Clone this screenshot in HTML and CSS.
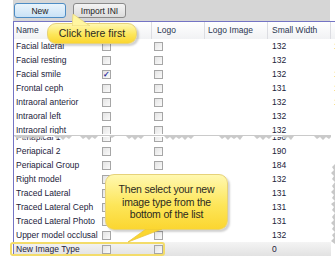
FILE: index.html
```html
<!DOCTYPE html>
<html lang="en">
<head>
    <meta charset="UTF-8">
    <title>Image Types</title>
    <link rel="stylesheet" href="styles.css">
</head>
<body>
    <div class="janela">
        <div class="barra">
            <button class="botao ativo">New</button>
            <button class="botao">Import INI</button>
        </div>

        <div class="grelha">
            <div class="linha cabecalho">
                <div class="col nome">Name</div>
                <div class="col def">Default</div>
                <div class="col logo">Logo</div>
                <div class="col img">Logo Image</div>
                <div class="col larg">Small Width</div>
                <div class="col extra"></div>
            </div>

            <div class="parte cima">
                <div class="linha"><div class="col nome">Facial lateral</div><div class="col def"><span class="caixinha"></span></div><div class="col logo"><span class="caixinha"></span></div><div class="col img"></div><div class="col larg">132</div><div class="col extra">1</div></div>
                <div class="linha"><div class="col nome">Facial resting</div><div class="col def"><span class="caixinha"></span></div><div class="col logo"><span class="caixinha"></span></div><div class="col img"></div><div class="col larg">132</div><div class="col extra"></div></div>
                <div class="linha"><div class="col nome">Facial smile</div><div class="col def"><span class="caixinha marcada">&#10003;</span></div><div class="col logo"><span class="caixinha"></span></div><div class="col img"></div><div class="col larg">132</div><div class="col extra">1</div></div>
                <div class="linha"><div class="col nome">Frontal ceph</div><div class="col def"><span class="caixinha"></span></div><div class="col logo"><span class="caixinha"></span></div><div class="col img"></div><div class="col larg">131</div><div class="col extra">1</div></div>
                <div class="linha"><div class="col nome">Intraoral anterior</div><div class="col def"><span class="caixinha"></span></div><div class="col logo"><span class="caixinha"></span></div><div class="col img"></div><div class="col larg">132</div><div class="col extra">1</div></div>
                <div class="linha"><div class="col nome">Intraoral left</div><div class="col def"><span class="caixinha"></span></div><div class="col logo"><span class="caixinha"></span></div><div class="col img"></div><div class="col larg">132</div><div class="col extra"></div></div>
                <div class="linha"><div class="col nome">Intraoral right</div><div class="col def"><span class="caixinha"></span></div><div class="col logo"><span class="caixinha"></span></div><div class="col img"></div><div class="col larg">132</div><div class="col extra"></div></div>
            </div>

            <div class="parte baixo">
                <svg class="rasgo" width="330" height="7" viewBox="0 0 330 7">
                    <rect x="0" y="0" width="330" height="3" fill="#ffffff"/>
                    <path d="M0 2 L4 5 L7 3 L10 6 L13 3 L16 5 L19 3 L22 6 L25 3 L28 5 L31 2 L40 2 L43 5 L46 3 L49 6 L52 3 L55 5 L58 2 L66 2 L69 5 L72 3 L75 6 L78 3 L81 5 L84 2 L95 2 L98 4 L101 2 L112 2 L115 5 L118 3 L121 6 L124 3 L127 5 L130 2 L150 2 L153 5 L156 3 L159 6 L162 3 L165 5 L168 3 L171 6 L174 3 L177 5 L180 2 L205 2 L208 5 L211 3 L214 6 L217 3 L220 5 L223 3 L226 6 L229 2 L240 2 L243 5 L246 3 L249 6 L252 3 L255 5 L258 2 L268 2 L271 5 L274 3 L277 6 L280 2 L300 2 L303 5 L306 3 L309 6 L312 3 L315 5 L318 2 L330 2 L330 1 L0 1 Z" fill="#cacaca"/>
                </svg>
                <svg class="borda" width="6" height="122" viewBox="0 0 6 122">
                    <rect x="2" y="0" width="4" height="122" fill="#ffffff"/>
                    <path d="M6 30 L3 33 L5 36 L2 39 L5 42 L3 45 L6 48 L3 52 L5 55 L2 58 L5 61 L3 64 L6 67 L2 70 L5 73 L3 76 L6 79 L3 83 L5 86 L2 89 L5 92 L3 95 L6 98 L3 101 L5 104 L2 107 L6 110 Z" fill="#c8c8c8"/>
                </svg>
                <div class="linha"><div class="col nome">Periapical 1</div><div class="col def"><span class="caixinha"></span></div><div class="col logo"><span class="caixinha"></span></div><div class="col img"></div><div class="col larg">190</div><div class="col extra"></div></div>
                <div class="linha"><div class="col nome">Periapical 2</div><div class="col def"><span class="caixinha"></span></div><div class="col logo"><span class="caixinha"></span></div><div class="col img"></div><div class="col larg">190</div><div class="col extra"></div></div>
                <div class="linha"><div class="col nome">Periapical Group</div><div class="col def"><span class="caixinha"></span></div><div class="col logo"><span class="caixinha"></span></div><div class="col img"></div><div class="col larg">184</div><div class="col extra">1</div></div>
                <div class="linha"><div class="col nome">Right model</div><div class="col def"><span class="caixinha"></span></div><div class="col logo"><span class="caixinha"></span></div><div class="col img"></div><div class="col larg">132</div><div class="col extra">1</div></div>
                <div class="linha"><div class="col nome">Traced Lateral</div><div class="col def"><span class="caixinha"></span></div><div class="col logo"><span class="caixinha"></span></div><div class="col img"></div><div class="col larg">131</div><div class="col extra"></div></div>
                <div class="linha"><div class="col nome">Traced Lateral Ceph</div><div class="col def"><span class="caixinha"></span></div><div class="col logo"><span class="caixinha"></span></div><div class="col img"></div><div class="col larg">131</div><div class="col extra"></div></div>
                <div class="linha"><div class="col nome">Traced Lateral Photo</div><div class="col def"><span class="caixinha"></span></div><div class="col logo"><span class="caixinha"></span></div><div class="col img"></div><div class="col larg">131</div><div class="col extra"></div></div>
                <div class="linha"><div class="col nome">Upper model occlusal</div><div class="col def"><span class="caixinha"></span></div><div class="col logo"><span class="caixinha"></span></div><div class="col img"></div><div class="col larg">132</div><div class="col extra"></div></div>
                <div class="linha selecionada"><div class="col nome">New Image Type</div><div class="col def"><span class="caixinha"></span></div><div class="col logo"><span class="caixinha"></span></div><div class="col img"></div><div class="col larg">0</div><div class="col extra"></div></div>
            </div>
        </div>

        <div class="destaque"></div>

        <div class="balao primeiro">
            <svg class="ponta" width="22" height="12" viewBox="0 0 22 12">
                <path d="M0 12 L1 0 L18 12 Z" fill="#fff6a0" stroke="#e6d47a" stroke-width="0.8"/>
            </svg>
            Click here first
        </div>

        <div class="balao segundo">
            <svg class="ponta" width="36" height="14" viewBox="0 0 36 14">
                <path d="M18 0 L0 13 L34 0 Z" fill="#fbd630" stroke="#e8c640" stroke-width="0.8"/>
            </svg>
            Then select your new<br>image type from the<br>bottom of the list
        </div>
    </div>
</body>
</html>
```

FILE: styles.css
```css
body {
    margin: 0;
    background: #ffffff;
    font-family: "Liberation Sans", Arial, sans-serif;
}
.janela {
    position: relative;
    width: 335px;
    height: 269px;
    overflow: hidden;
}
.barra {
    display: flex;
    align-items: center;
    gap: 7px;
    margin-left: 13px;
    width: 316px;
    height: 21px;
    padding-left: 1px;
    background: #d6d6d6;
}
.botao {
    height: 15px;
    padding: 0;
    font-family: inherit;
    font-size: 8.5px;
    color: #222;
    border: 1px solid #8a8a8a;
    border-radius: 3px;
    background: linear-gradient(#f4f4f4, #dcdcdc);
}
.botao.ativo {
    width: 52px;
    border-color: #4d8cc4;
    background: linear-gradient(#eaf4fc, #c9e2f6);
}
.botao:not(.ativo) {
    width: 53px;
}
.grelha {
    margin-left: 13px;
    width: 330px;
    border-left: 1px solid #7474c4;
    border-top: 1px solid #7474c4;
    font-size: 8.5px;
    color: #22223a;
}
.linha {
    display: flex;
    height: 14px;
    align-items: center;
    flex-shrink: 0;
}
.col {
    flex-shrink: 0;
    white-space: nowrap;
    overflow: hidden;
    box-sizing: border-box;
}
.nome { width: 86px; padding-left: 2px; }
.def { width: 52px; padding-left: 2px; }
.logo { width: 53px; padding-left: 2px; }
.img { width: 63px; padding-left: 3px; }
.larg { width: 63px; padding-left: 4px; }
.extra { width: 20px; padding-left: 3px; color: #d6a040; }
.cabecalho {
    height: 17px;
    background: linear-gradient(#ffffff, #f1f2f4);
    color: #2a3550;
}
.cabecalho .col {
    height: 17px;
    line-height: 17px;
    border-right: 1px solid #dcdde2;
}
.cabecalho .def,
.cabecalho .logo { padding-left: 5px; }
.cabecalho .img { padding-left: 3px; }
.parte {
    display: flex;
    flex-direction: column;
    overflow: hidden;
}
.cima {
    height: 95px;
}
.baixo {
    position: relative;
    height: 122px;
    justify-content: flex-end;
}
.rasgo {
    position: absolute;
    top: 0;
    left: 0;
    z-index: 1;
}
.borda {
    position: absolute;
    top: 0;
    left: 315px;
    z-index: 1;
}
.caixinha {
    display: block;
    width: 9px;
    height: 9px;
    box-sizing: border-box;
    border: 1px solid #a6a6a6;
    background: linear-gradient(135deg, #e4e4e4, #fafafa);
    font-size: 8px;
    line-height: 7px;
    text-align: center;
    color: #2b2b9c;
    font-weight: bold;
}
.selecionada {
    background: linear-gradient(#f4f4f4, #e2e2e2);
}
.destaque {
    position: absolute;
    left: 10px;
    top: 242px;
    width: 151px;
    height: 10px;
    border: 2px solid #f3dc6a;
    border-radius: 3px;
}
.balao {
    position: absolute;
    box-sizing: border-box;
    color: #2c2a20;
    text-align: center;
    border: 1px solid #e6d27a;
    border-radius: 9px;
    background: linear-gradient(#fff8b0, #fde65a 55%, #fbd630);
    box-shadow: 2px 2px 2px rgba(0, 0, 0, 0.18);
    font-size: 10.5px;
}
.primeiro {
    left: 47px;
    top: 23px;
    width: 90px;
    height: 21px;
    line-height: 19px;
}
.primeiro .ponta {
    position: absolute;
    left: 24px;
    top: -10px;
}
.segundo {
    left: 105px;
    top: 174px;
    width: 123px;
    height: 56px;
    padding-top: 8px;
    line-height: 12.5px;
    letter-spacing: -0.2px;
}
.segundo .ponta {
    position: absolute;
    left: 22px;
    top: 54px;
}
```
